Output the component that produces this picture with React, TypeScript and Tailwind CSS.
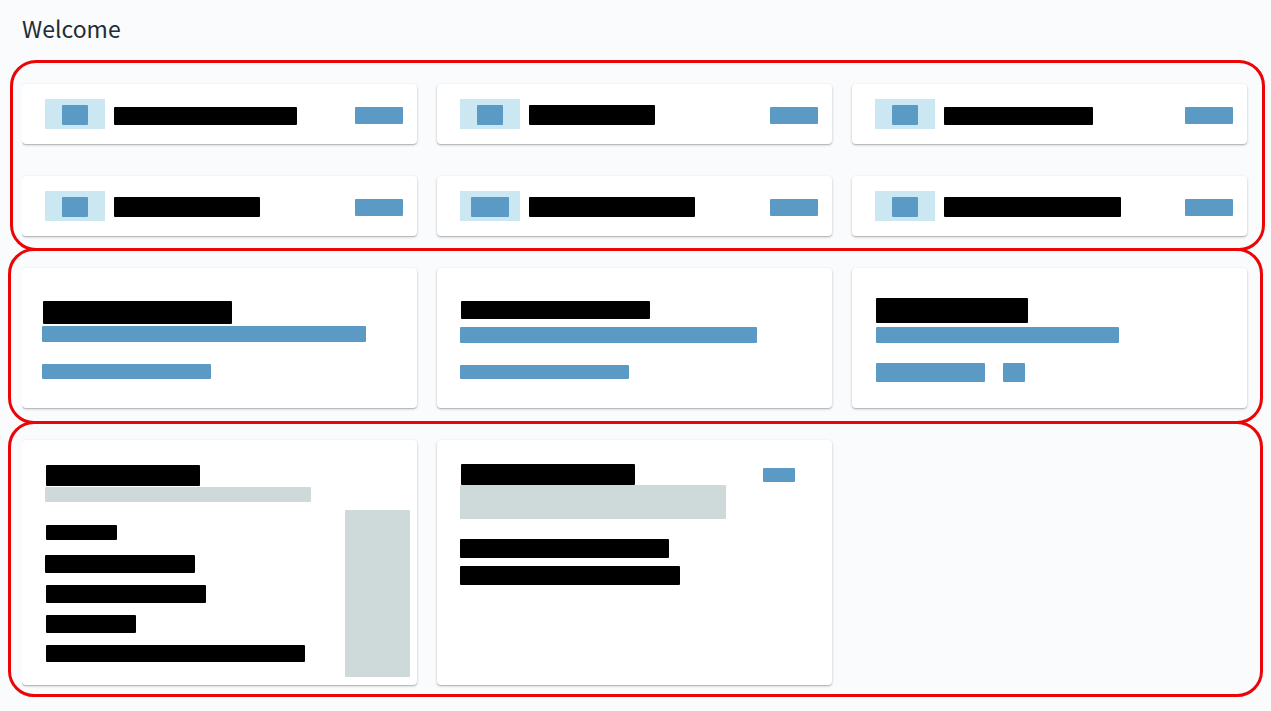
import type { ReactNode } from 'react';
import clsx from 'clsx';

const tones = {
  black: 'bg-black',
  blue: 'bg-[#5a9ac5]',
  grey: 'bg-[#cedad9]',
};

function Bar({ tone, className }: { tone: keyof typeof tones; className: string }) {
  return <div className={clsx('shrink-0 rounded-[1px]', tones[tone], className)} />;
}

function Card({ className, children }: { className?: string; children: ReactNode }) {
  return (
    <article
      className={clsx(
        'rounded bg-white shadow-[0_1px_3px_0_rgba(0,0,0,0.2),0_1px_1px_0_rgba(0,0,0,0.16)]',
        className,
      )}
    >
      {children}
    </article>
  );
}

function Section({ className, children }: { className: string; children: ReactNode }) {
  return (
    <section className={clsx('rounded-[26px] border-3 border-[#ea0606]', className)}>
      <div className="grid grid-cols-3 gap-x-5 gap-y-8 [clip-path:inset(-8px_-8px_-8px_0)]">{children}</div>
    </section>
  );
}

const summaries = [
  { chip: 'w-[26px]', title: 'h-[18px] w-[183px]' },
  { chip: 'w-[26px]', title: 'h-5 w-[126px]' },
  { chip: 'w-[26px]', title: 'h-[18px] w-[149px]' },
  { chip: 'w-[26px]', title: 'h-5 w-[146px]' },
  { chip: 'w-[38px]', title: 'h-5 w-[166px]' },
  { chip: 'w-[26px]', title: 'h-5 w-[177px]' },
];

function SummaryCard({ chip, title }: { chip: string; title: string }) {
  return (
    <Card className="flex items-end py-[15px] pr-3.5 pl-[23px]">
      <div className="mr-[9px] flex h-[30px] w-[60px] shrink-0 items-end justify-center bg-[#cbe7f1] pb-1">
        <Bar tone="blue" className={clsx('h-5', chip)} />
      </div>
      <Bar tone="black" className={clsx('mb-1', title)} />
      <Bar tone="blue" className="mb-[5px] ml-auto h-[17px] w-12" />
    </Card>
  );
}

export default function App() {
  return (
    <main className="min-h-screen bg-[#fafbfd] pb-3.5">
      <h1 className="px-[22px] pt-2.5 pb-3.5 font-['Noto_Sans_CJK_SC',sans-serif] text-[23px] leading-9 text-[#252b33]">
        Welcome
      </h1>

      <Section className="mr-1.5 ml-2.5 pt-[21px] pr-[15px] pb-3 pl-[9px]">
        {summaries.map((item, index) => (
          <SummaryCard key={index} {...item} />
        ))}
      </Section>

      <Section className="mx-2 -mt-[3px] pt-[17px] pr-[13px] pb-[13px] pl-[11px]">
        <Card className="px-5 pt-[33px] pb-[29px]">
          <Bar tone="black" className="ml-px h-[23px] w-[189px]" />
          <Bar tone="blue" className="mt-0.5 h-4 w-[324px]" />
          <Bar tone="blue" className="mt-[22px] h-[15px] w-[169px]" />
        </Card>
        <Card className="px-[23px] pt-[33px] pb-[29px]">
          <Bar tone="black" className="ml-px h-[18px] w-[189px]" />
          <Bar tone="blue" className="mt-2 h-4 w-[297px]" />
          <Bar tone="blue" className="mt-[22px] h-3.5 w-[169px]" />
        </Card>
        <Card className="px-6 pt-[30px] pb-[26px]">
          <Bar tone="black" className="h-[25px] w-[152px]" />
          <Bar tone="blue" className="mt-1 h-4 w-[243px]" />
          <div className="mt-5 flex gap-[18px]">
            <Bar tone="blue" className="h-[19px] w-[109px]" />
            <Bar tone="blue" className="h-[19px] w-[22px]" />
          </div>
        </Card>
      </Section>

      <Section className="mx-2 -mt-[3px] pt-4 pr-[13px] pb-[9px] pl-[11px]">
        <Card className="flex items-start justify-between pt-[25px] pr-[7px] pb-2 pl-[23px]">
          <div>
            <Bar tone="black" className="ml-px h-[21px] w-[154px]" />
            <Bar tone="grey" className="mt-px h-[15px] w-[266px]" />
            <div className="mt-[23px] flex flex-col gap-3 pl-px">
              <Bar tone="black" className="mb-[3px] h-[15px] w-[71px]" />
              <Bar tone="black" className="-ml-px h-[18px] w-[150px]" />
              <Bar tone="black" className="h-[18px] w-40" />
              <Bar tone="black" className="h-[18px] w-[90px]" />
              <Bar tone="black" className="h-[17px] w-[259px]" />
            </div>
          </div>
          <Bar tone="grey" className="mt-[45px] h-[167px] w-[65px]" />
        </Card>
        <Card className="flex items-start justify-between pt-6 pr-[37px] pl-[23px]">
          <div>
            <Bar tone="black" className="ml-px h-[21px] w-[174px]" />
            <Bar tone="grey" className="h-[34px] w-[266px]" />
            <div className="mt-5 flex flex-col gap-2">
              <Bar tone="black" className="h-[19px] w-[209px]" />
              <Bar tone="black" className="h-[19px] w-[220px]" />
            </div>
          </div>
          <Bar tone="blue" className="mt-1 h-3.5 w-8" />
        </Card>
      </Section>
    </main>
  );
}
